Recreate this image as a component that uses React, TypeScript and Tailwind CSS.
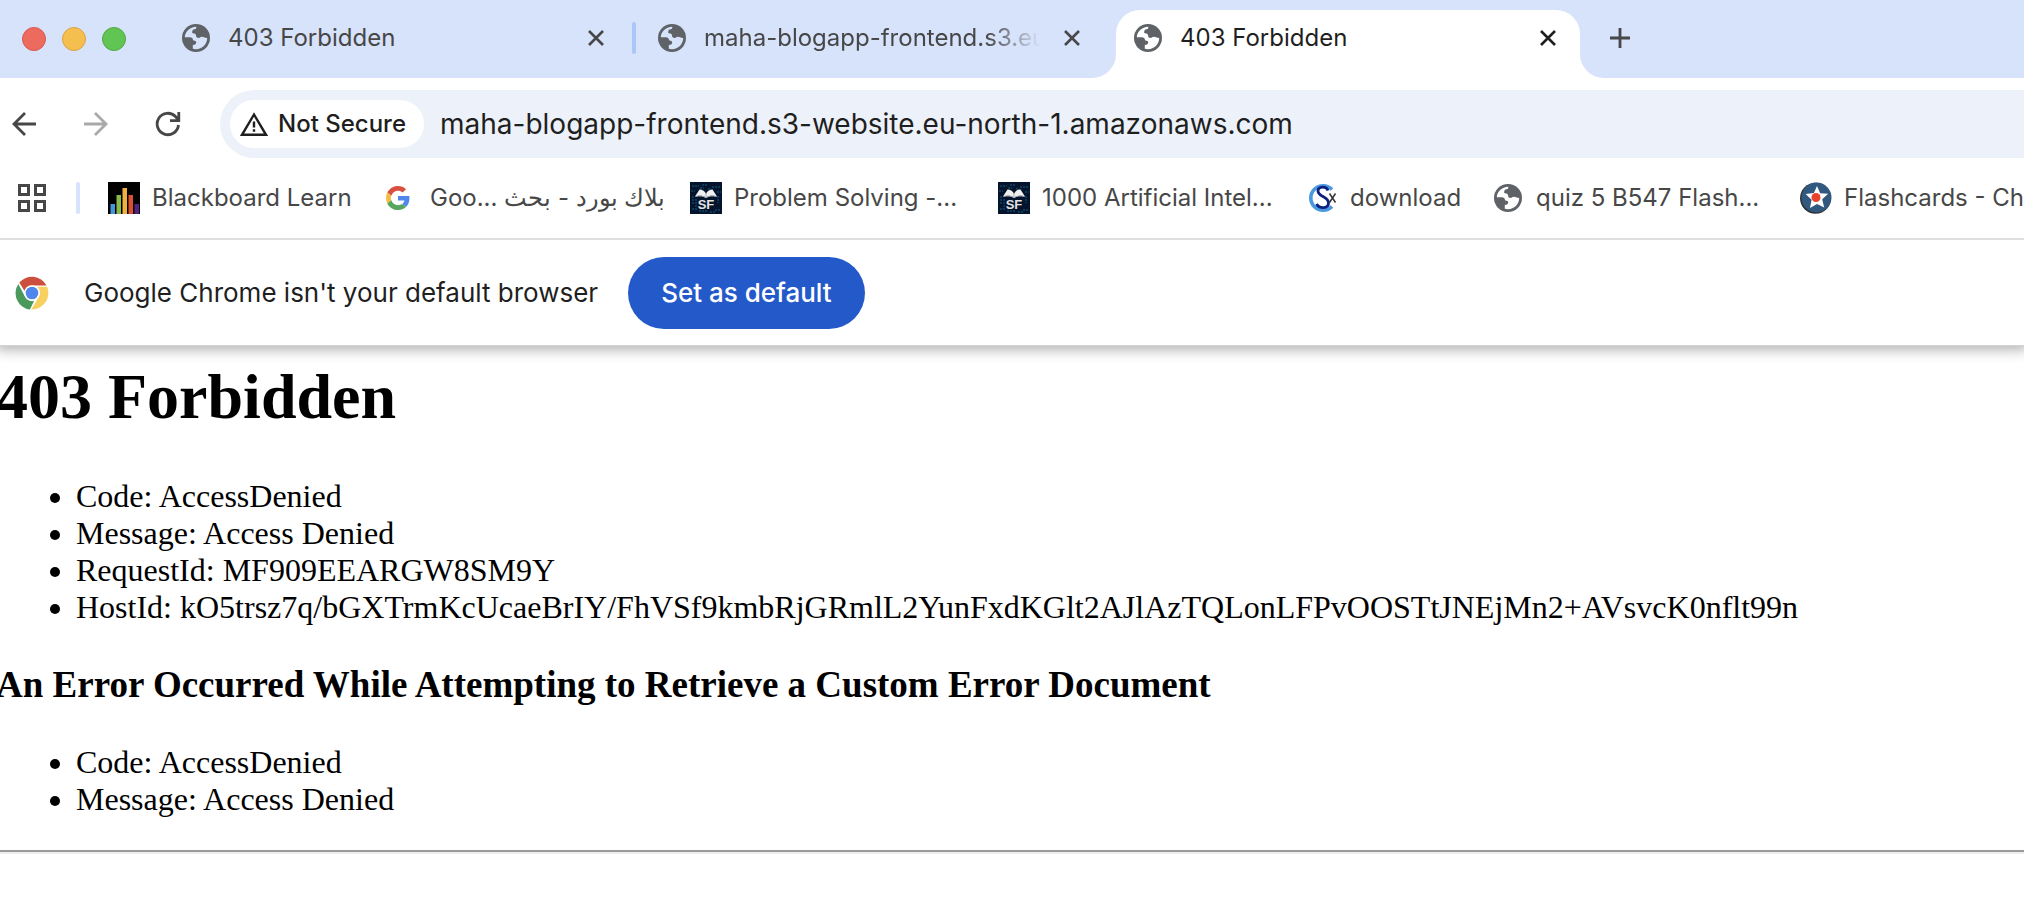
import React from 'react';

const ui = "font-['Inter','Noto_Sans',sans-serif]";

function Globe() {
  return (
    <svg viewBox="0 0 28 28" className="size-7 shrink-0" aria-hidden="true">
      <circle cx="14" cy="14" r="14" fill="#5f6368" />
      <path
        fill="#fff"
        className="fill-[var(--globe-gap,#fff)]"
        d="M2.800 13.200C3.100 7.500 7.800 3 14.200 2.800C14.800 4.600 13.600 5.600 11.600 5.600C10.400 5.600 10.600 6.800 10.200 7.800C9.800 8.900 10.600 9.400 12 9.400C13.600 9.400 14 10.400 14 11.600C14 13.200 15 14 16.600 14C18 14 18.400 12.800 20 12.800C21.600 12.800 22.400 14 25.200 14C25.200 20.200 20.200 25.200 14 25.200C12.800 25.200 11.800 25 10.800 24.700V21C12.600 21 14 20.600 14.200 18.800C14.400 17.200 12.800 16.800 11.600 16.600C10.800 16.400 11 15 10.400 14.200C9.600 13.200 8.400 13.200 7 13.200Z"
      />
    </svg>
  );
}

function Close() {
  return (
    <svg viewBox="0 0 16 16" className="size-4" fill="none" stroke="currentColor" strokeWidth="2.6" aria-hidden="true">
      <path d="M1 1l14 14M15 1L1 15" />
    </svg>
  );
}

function BlackboardIcon() {
  return (
    <svg viewBox="0 0 32 32" className="size-8 shrink-0" aria-hidden="true">
      <path fill="#000" d="M0 0h32v32H0z" />
      <path fill="#4397d8" d="M2.500 22H7v10H2.500z" />
      <path fill="#87b94b" d="M8.500 13H13v19H8.500z" />
      <path fill="#f0b13f" d="M14.500 6H19v26h-4.500z" />
      <path fill="#d9502f" d="M20.500 13H25v19h-4.500z" />
      <path fill="#53227f" d="M26.500 22H31v10h-4.500z" />
    </svg>
  );
}

function GoogleIcon() {
  return (
    <svg viewBox="0 0 48 48" className="size-6 shrink-0" aria-hidden="true">
      <path fill="#d9503f" d="M24 9.500c3.540 0 6.710 1.220 9.210 3.600l6.850-6.850C35.900 2.380 30.470 0 24 0 14.620 0 6.510 5.380 2.560 13.220l7.980 6.190C12.430 13.720 17.740 9.500 24 9.500z" />
      <path fill="#5186ec" d="M46.980 24.550c0-1.570-.15-3.090-.38-4.550H24v9.020h12.940c-.58 2.960-2.260 5.480-4.780 7.180l7.730 6c4.510-4.180 7.090-10.360 7.090-17.650z" />
      <path fill="#f2bd42" d="M10.530 28.590A14.500 14.500 0 0 1 9.770 24c0-1.600.27-3.140.76-4.590l-7.980-6.190A23.900 23.900 0 0 0 0 24c0 3.880.92 7.540 2.560 10.780l7.970-6.190z" />
      <path fill="#58a55c" d="M24 48c6.480 0 11.930-2.130 15.890-5.810l-7.730-6c-2.150 1.450-4.920 2.300-8.160 2.300-6.260 0-11.570-4.220-13.470-9.910l-7.980 6.190C6.510 42.620 14.620 48 24 48z" />
    </svg>
  );
}

function SfIcon() {
  return (
    <svg viewBox="0 0 32 32" className="size-8 shrink-0" aria-hidden="true">
      <path fill="#04142c" d="M0 0h32v32H0z" />
      <path
        d="M2 4h7M12 3h6M22 5h8M1 9h4M27 10h4M3 14v8M6 17v11M28 14v7M25 28h6M9 29h8M20 30h5M2 27h3M10 6h4M19 6v3"
        stroke="#0d4766"
        strokeWidth="1.500"
        strokeDasharray="2 1"
      />
      <path fill="#f0f0f0" d="M9.500 7.500c3 0 5.500 1.500 6.500 4.500 1-3 3.500-4.500 6.500-4.500l4.500 7c-4-1.200-8-1-11 1.300-3-2.300-7-2.500-11-1.300l4.500-7Z" />
      <path fill="none" stroke="#a9adb3" strokeWidth="1" d="M16 11.500v4M5.500 14.500c4-1 7.500-.8 10.500 1.300 3-2.100 6.500-2.300 10.500-1.300" />
      <text x="16" y="27" textAnchor="middle" fill="#e2e2e2" className="font-['Liberation_Sans',sans-serif] text-[13px] font-bold">
        SF
      </text>
    </svg>
  );
}

function DownloadSiteIcon() {
  return (
    <svg viewBox="0 0 32 32" className="size-8 shrink-0" fill="none" aria-hidden="true">
      <path d="M26 7.500A12.300 12.300 0 1 0 26 24.500" stroke="#4a98de" strokeWidth="3.600" />
      <path d="M22 8.500c-1.500-4.500-10-4.500-10 .5 0 6 10.500 5 10.500 12 0 6-9 6-12 1" stroke="#0d2080" strokeWidth="2.800" />
      <path d="M23.500 11.500l6 9M29.500 11.500l-6 9" stroke="#333" strokeWidth="1.500" />
    </svg>
  );
}

function StarIcon() {
  return (
    <svg viewBox="0 0 32 32" className="size-8 shrink-0" aria-hidden="true">
      <circle cx="15.500" cy="16.300" r="15.500" fill="#30343a" />
      <circle cx="16.500" cy="15.500" r="15" fill="#31587e" />
      <path fill="#fff" d="M17 4l3.200 7.200 8 .6-6 5.500 2 8.300-7.200-3.600L10 26l1.600-8.300-6-5.800 8.300-.8L17 4Z" />
      <circle cx="16" cy="15.500" r="4.500" fill="#e8412c" />
    </svg>
  );
}

function ChromeIcon() {
  return (
    <svg viewBox="0 0 36 36" className="size-[34px] shrink-0" aria-hidden="true">
      <circle cx="18" cy="18" r="18" fill="#fff" />
      <path fill="#cb4e3f" d="M4.500 7A17.500 17.500 0 0 1 33.300 10H18a8.300 8.300 0 0 0-7.900 6L4.500 7Z" />
      <path fill="#4a9a5e" d="M3.500 8.500A17.500 17.500 0 0 0 15.800 35.500L20.300 26.300A8.500 8.500 0 0 1 10.300 21.500L3.500 8.500Z" />
      <path fill="#f8d05f" d="M34 11.300A17.500 17.500 0 0 1 17.400 35.500L25 22.200A8.300 8.300 0 0 0 23.300 11.300H34Z" />
      <circle cx="18" cy="18" r="8.300" fill="#fff" />
      <circle cx="18" cy="18" r="6.700" fill="#4f86ec" />
    </svg>
  );
}

function Tab({ title, active = false, fade = false }: { title: string; active?: boolean; fade?: boolean }) {
  return (
    <div
      className={`relative flex w-[464px] shrink-0 items-center pl-[18px] pr-6 ${
        active ? 'mt-2.5 h-[68px] rounded-t-3xl bg-white pb-3 text-[#1f1f1f]' : 'h-[78px] pb-0.5 text-[#474747] [--globe-gap:#d7e2fb]'
      }`}
    >
      {active && (
        <>
          <svg viewBox="0 0 24 24" className="absolute bottom-0 -left-6 size-6" aria-hidden="true">
            <path fill="#fff" d="M24 0v24H0A24 24 0 0 0 24 0Z" />
          </svg>
          <svg viewBox="0 0 24 24" className="absolute -right-6 bottom-0 size-6" aria-hidden="true">
            <path fill="#fff" d="M0 0v24h24A24 24 0 0 1 0 0Z" />
          </svg>
        </>
      )}
      <Globe />
      <span
        className={`ml-[18px] mr-6 min-w-0 flex-1 overflow-hidden text-[24px] leading-8 whitespace-nowrap ${
          fade ? '[mask-image:linear-gradient(to_right,#000_84%,transparent)]' : ''
        }`}
      >
        {title}
      </span>
      <button type="button" aria-label={`Close ${title}`} className="shrink-0">
        <Close />
      </button>
    </div>
  );
}

const bookmarks: { label: string; icon: React.ReactNode; box: string; rtl?: boolean }[] = [
  { label: 'Blackboard Learn', icon: <BlackboardIcon />, box: 'w-[276px] gap-3' },
  { label: 'بلاك بورد - بحث ...Goo', icon: <GoogleIcon />, box: 'w-[306px] gap-5 pl-0.5', rtl: true },
  { label: 'Problem Solving -...', icon: <SfIcon />, box: 'w-[308px] gap-3' },
  { label: '1000 Artificial Intel...', icon: <SfIcon />, box: 'w-[308px] gap-3' },
  { label: 'download', icon: <DownloadSiteIcon />, box: 'w-[186px] gap-3' },
  { label: 'quiz 5 B547 Flash...', icon: <Globe />, box: 'w-[308px] gap-3.5 pl-0.5' },
  { label: 'Flashcards - Chapter 1', icon: <StarIcon />, box: 'gap-3' },
];

export default function App() {
  return (
    <div className="min-h-screen overflow-hidden bg-white">
      <header className={`relative z-10 bg-white ${ui}`}>
        <div className="flex h-[78px] items-start overflow-hidden bg-[#d7e2fb]">
          <div className="flex h-[78px] w-[164px] shrink-0 items-center gap-4 pl-[22px]">
            <button type="button" aria-label="Close window" className="size-6 rounded-full border border-[#d8584d] bg-[#ed6a5e]" />
            <button type="button" aria-label="Minimize window" className="size-6 rounded-full border border-[#dba343] bg-[#f5bf4f]" />
            <button type="button" aria-label="Zoom window" className="size-6 rounded-full border border-[#52a842] bg-[#61c554]" />
          </div>
          <Tab title="403 Forbidden" />
          <div className="flex h-[76px] w-3 shrink-0 items-center justify-center">
            <div className="h-8 w-1 rounded-full bg-[#adc6f8]" />
          </div>
          <Tab title="maha-blogapp-frontend.s3.eu-north-1" fade />
          <div className="w-3 shrink-0" />
          <Tab title="403 Forbidden" active />
          <button type="button" aria-label="New tab" className="flex h-[76px] shrink-0 items-center pl-[30px] text-[#474747]">
            <svg viewBox="0 0 20 20" className="size-5" fill="none" stroke="currentColor" strokeWidth="2.800" aria-hidden="true">
              <path d="M10 0v20M0 10h20" />
            </svg>
          </button>
        </div>

        <div className="flex items-center pt-3">
          <nav className="flex w-[220px] shrink-0 items-center pl-[11px] text-[#474747]">
            <button type="button" aria-label="Back">
              <svg viewBox="0 0 26 26" className="size-[26px]" fill="none" stroke="currentColor" strokeWidth="2.800" aria-hidden="true">
                <path d="M14 2L3 13 14 24M3 13H25" />
              </svg>
            </button>
            <button type="button" aria-label="Forward" className="ml-[46px] text-[#a9a9a9]">
              <svg viewBox="0 0 26 26" className="size-[26px]" fill="none" stroke="currentColor" strokeWidth="2.800" aria-hidden="true">
                <path d="M12 2L23 13 12 24M23 13H1" />
              </svg>
            </button>
            <button type="button" aria-label="Reload" className="ml-[46px]">
              <svg viewBox="0 0 26 26" className="size-[26px]" fill="none" stroke="currentColor" strokeWidth="2.800" aria-hidden="true">
                <path d="M23.500 14A10.700 10.700 0 1 1 20.500 5.500L23.600 9M23.800 1v8.600h-8.800" />
              </svg>
            </button>
          </nav>
          <div className="flex h-[68px] flex-1 items-center rounded-l-full bg-[#edf2fa] pl-2.5">
            <button type="button" className="flex h-12 shrink-0 items-center rounded-full bg-white pr-[18px] pl-2.5 text-[24px] leading-8 font-medium text-[#1f1f1f]">
              <svg viewBox="0 0 28 24" className="mr-2.5 h-6 w-7" fill="none" stroke="currentColor" strokeWidth="2.400" aria-hidden="true">
                <path d="M14 2.500L2 22.800h24L14 2.500ZM14 9.500v6M14 17.200v2.600" />
              </svg>
              Not Secure
            </button>
            <input
              aria-label="Address"
              defaultValue="maha-blogapp-frontend.s3-website.eu-north-1.amazonaws.com"
              className="ml-4 min-w-0 flex-1 bg-transparent text-[28px] leading-9 text-[#1f1f1f] outline-none"
            />
          </div>
        </div>

        <div className="flex h-[82px] items-center overflow-hidden border-b-2 border-[#e0e0e0] text-[24px] leading-8 whitespace-nowrap text-[#474747]">
          <button type="button" aria-label="Tab groups" className="ml-[18px] shrink-0">
            <svg viewBox="0 0 28 28" className="size-7" fill="none" stroke="currentColor" strokeWidth="3" aria-hidden="true">
              <path d="M1.500 1.500h9v9h-9zM17.500 1.500h9v9h-9zM1.500 17.500h9v9h-9zM17.500 17.500h9v9h-9z" />
            </svg>
          </button>
          <div className="mr-7 ml-[30px] h-8 w-1 shrink-0 rounded-full bg-[#d7e2fb]" />
          {bookmarks.map((b) => (
            <a key={b.label} href="#" className={`flex shrink-0 items-center ${b.box}`}>
              {b.icon}
              <span dir={b.rtl ? 'rtl' : 'ltr'}>{b.label}</span>
            </a>
          ))}
        </div>
      </header>

      <section className={`relative flex h-[106px] items-center border-b border-[#d4d4d4] bg-white pl-[15px] shadow-[0_0_12px_4px_rgba(0,0,0,0.3)] ${ui}`}>
        <ChromeIcon />
        <p className="ml-[35px] text-[26px] leading-8 text-[#1f1f1f]">Google Chrome isn't your default browser</p>
        <button type="button" className="ml-[30px] h-[72px] rounded-full bg-[#2459c9] px-[33px] text-[26px] leading-8 font-medium text-white">
          Set as default
        </button>
      </section>

      <main className="font-['Liberation_Serif',serif] text-[32px] leading-[37px] text-black">
        <h1 className="-ml-1 pt-3.5 text-[64px] leading-[74px] font-bold">403 Forbidden</h1>
        <ul className="list-disc pt-11 pl-[76px]">
          <li>Code: AccessDenied</li>
          <li>Message: Access Denied</li>
          <li>RequestId: MF909EEARGW8SM9Y</li>
          <li>HostId: kO5trsz7q/bGXTrmKcUcaeBrIY/FhVSf9kmbRjGRmlL2YunFxdKGlt2AJlAzTQLonLFPvOOSTtJNEjMn2+AVsvcK0nflt99n</li>
        </ul>
        <h3 className="-ml-1 pt-[37px] text-[37px] leading-[43px] font-bold">An Error Occurred While Attempting to Retrieve a Custom Error Document</h3>
        <ul className="list-disc pt-[38px] pl-[76px]">
          <li>Code: AccessDenied</li>
          <li>Message: Access Denied</li>
        </ul>
        <hr className="mt-8 border-t-2 border-b-2 border-t-[#9a9a9a] border-b-[#eeeeee]" />
      </main>
    </div>
  );
}
